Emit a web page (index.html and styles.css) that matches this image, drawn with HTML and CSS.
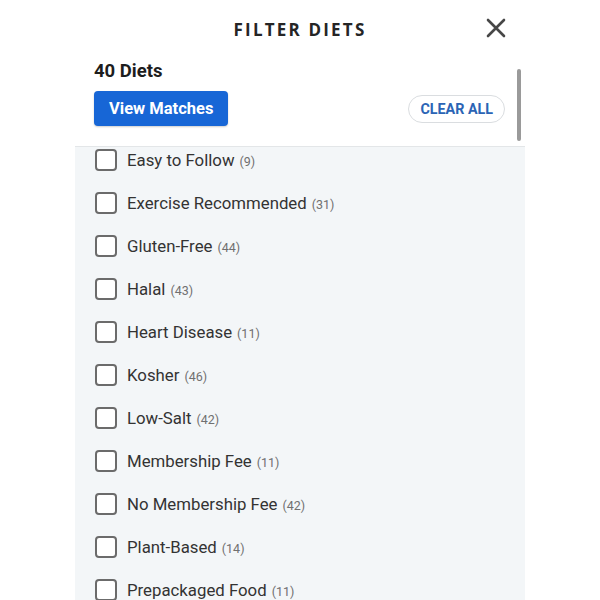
FILE: index.html
```html
<!DOCTYPE html>
<html lang="en">
<head>
<meta charset="utf-8">
<title>Filter Diets</title>
<link rel="stylesheet" href="styles.css">
</head>
<body>
<div class="panel">
  <header class="topbar">
    <span></span>
    <h1 class="title">FILTER DIETS</h1>
    <button class="close" aria-label="Close">
      <svg width="20" height="20" viewBox="0 0 20 20"><path d="M2 2 L18 18 M18 2 L2 18" stroke="#474747" stroke-width="2.6" stroke-linecap="round" fill="none"/></svg>
    </button>
  </header>
  <section class="summary">
    <div class="count">40 Diets</div>
    <div class="actions">
      <button class="primary">View Matches</button>
      <button class="clear">CLEAR ALL</button>
    </div>
    <div class="scrollbar"></div>
  </section>
  <div class="list">
    <ul class="items">
      <li><span class="box"></span><span class="label">Easy to Follow</span><span class="num">(9)</span></li>
      <li><span class="box"></span><span class="label">Exercise Recommended</span><span class="num">(31)</span></li>
      <li><span class="box"></span><span class="label">Gluten-Free</span><span class="num">(44)</span></li>
      <li><span class="box"></span><span class="label">Halal</span><span class="num">(43)</span></li>
      <li><span class="box"></span><span class="label">Heart Disease</span><span class="num">(11)</span></li>
      <li><span class="box"></span><span class="label">Kosher</span><span class="num">(46)</span></li>
      <li><span class="box"></span><span class="label">Low-Salt</span><span class="num">(42)</span></li>
      <li><span class="box"></span><span class="label">Membership Fee</span><span class="num">(11)</span></li>
      <li><span class="box"></span><span class="label">No Membership Fee</span><span class="num">(42)</span></li>
      <li><span class="box"></span><span class="label">Plant-Based</span><span class="num">(14)</span></li>
      <li><span class="box"></span><span class="label">Prepackaged Food</span><span class="num">(11)</span></li>
    </ul>
  </div>
</div>
</body>
</html>
```

FILE: styles.css
```css
html, body {
  margin: 0;
  padding: 0;
  background: #ffffff;
  font-family: Roboto, "Liberation Sans", Arial, sans-serif;
  height: 100%;
  overflow: hidden;
}

.panel {
  width: 450px;
  margin-left: 75px;
  height: 600px;
  display: flex;
  flex-direction: column;
  background: #ffffff;
}

.topbar {
  height: 58px;
  display: grid;
  grid-template-columns: 1fr auto 1fr;
  align-items: center;
}

.title {
  margin: 0;
  font-family: "Open Sans", "Liberation Sans", sans-serif;
  font-weight: 700;
  font-size: 17px;
  letter-spacing: 2.2px;
  color: #252525;
}

.close {
  justify-self: end;
  margin-right: 19px;
  margin-top: -2px;
  background: none;
  border: none;
  padding: 0;
  width: 20px;
  height: 20px;
  display: flex;
}

.summary {
  position: relative;
  padding: 2px 20px 20px 19px;
  border-bottom: 1px solid #e3e6e8;
}

.count {
  font-size: 18.5px;
  font-weight: 700;
  color: #1d1d1d;
  line-height: 22px;
}

.actions {
  margin-top: 9px;
  display: flex;
  align-items: center;
  justify-content: space-between;
}

.primary {
  height: 35px;
  padding: 0 15px;
  background: #1766d6;
  color: #ffffff;
  border: none;
  border-radius: 4px;
  font-family: Roboto, "Liberation Sans", sans-serif;
  font-weight: 700;
  font-size: 16.5px;
  box-shadow: 0 1px 2px rgba(0,0,0,0.2);
}

.clear {
  height: 28px;
  padding: 0 11px;
  background: #ffffff;
  color: #2b64b5;
  border: 1px solid #dadde0;
  border-radius: 14px;
  font-family: Roboto, "Liberation Sans", sans-serif;
  font-weight: 700;
  font-size: 14.3px;
  margin-top: 1px;
}

.scrollbar {
  position: absolute;
  right: 4px;
  top: 11px;
  width: 4px;
  height: 72px;
  border-radius: 2px;
  background: #9a9a9a;
}

.list {
  flex: 1;
  background: #f3f6f8;
  overflow: hidden;
}

.items {
  list-style: none;
  margin: -9px 0 0 0;
  padding: 0 0 0 20px;
}

.items li {
  height: 43.1px;
  display: flex;
  align-items: center;
}

.box {
  width: 18px;
  height: 18px;
  border: 2px solid #6b6b6b;
  border-radius: 4px;
  background: #ffffff;
  margin-right: 10px;
  flex-shrink: 0;
}

.label {
  font-size: 16.8px;
  color: #333333;
}

.num {
  font-size: 12.5px;
  color: #707070;
  margin-left: 5px;
  margin-top: 3px;
}
```
